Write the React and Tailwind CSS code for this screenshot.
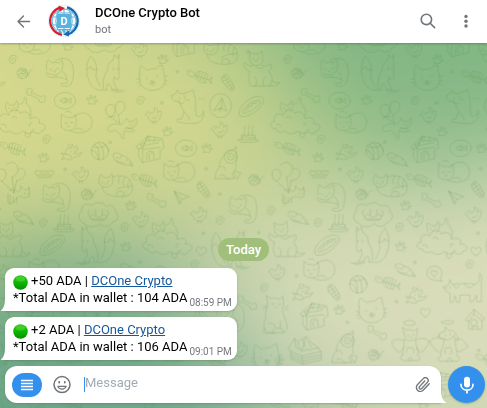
import { useEffect, useRef } from "react";

const GRADIENT_POINTS = [
  { x: 0.8, y: 0.1, rgb: [127, 181, 131] },
  { x: 0.35, y: 0.25, rgb: [213, 216, 141] },
  { x: 0.2, y: 0.9, rgb: [107, 165, 135] },
  { x: 0.65, y: 0.75, rgb: [219, 221, 187] },
];

function paintGradient(canvas) {
  const size = canvas.width;
  const ctx = canvas.getContext("2d");
  const image = ctx.createImageData(size, size);
  for (let row = 0; row < size; row++) {
    for (let col = 0; col < size; col++) {
      const cx = col / size - 0.5;
      const cy = row / size - 0.5;
      const swirl = 0.35 * Math.sqrt(cx * cx + cy * cy);
      const theta = swirl * swirl * 6.4;
      const px = 0.5 + cx * Math.cos(theta) - cy * Math.sin(theta);
      const py = 0.5 + cx * Math.sin(theta) + cy * Math.cos(theta);
      let total = 0;
      const sum = [0, 0, 0];
      for (const p of GRADIENT_POINTS) {
        const w = Math.max(0, 0.9 - Math.hypot(px - p.x, py - p.y)) ** 4;
        total += w;
        for (let i = 0; i < 3; i++) sum[i] += w * p.rgb[i];
      }
      const at = (row * size + col) * 4;
      for (let i = 0; i < 3; i++) image.data[at + i] = sum[i] / total;
      image.data[at + 3] = 255;
    }
  }
  ctx.putImageData(image, 0, 0);
}

// Line drawings of the wallpaper, each centred on its own origin.
const DOODLES = {
  fox: "M-4 48C-10 30-2 6 8-8C6-22 14-32 24-38L28-54L38-42L42-54V14C40 24 32 22 28 12L26 30C30 38 34 46 38 50H20C20 40 14 34 8 34C4 40 4 46 6 52H-18C-34 50-46 36-50 18C-60-6-54-32-44-50C-30-38-20-16-28 8C-24 22-20 34-14 42M-54-10L-42-18L-36-8L-24-10M25-14V-8M38-14V-8M18 54H60M30 58H50",
  face: "M-38-10C-40-24-38-34-34-38C-26-34-20-28-16-24C-6-28 4-30 10-28C16-36 24-40 30-40C32-28 34-18 36-8C44 14 30 34 4 36C-24 38-42 20-38-10M-16-2V2M14-8V-4M-4 8H4L0 12ZM0 12C-2 18-8 18-10 14M0 12C4 18 10 14 10 10M-2 17C-2 24 6 22 5 16M-46 2L-38 4M-46 14L-38 12M-40 24L-34 20M38-4L46-8M38 6L46 8M36 16L43 20",
  curl: "M-38-4C-40-20-38-30-34-36L-22-26C-14-30-8-28-2-26L8-36C12-24 12-12 6-2C-2 12-24 14-38 2M-30-8L-24-6M-8-8L-2-10M-18-2C-14 4-12 2-12-4M-12-32C2-46 30-42 38-24C46-4 42 20 38 30C34 44 20 46 6 42C2 38 6 34 12 34C22 36 26 32 24 24C12 18 0 18-10 16M-42 6C-36 18-20 20-8 14M10 0C18 4 22 12 22 22",
  loaf: "M-46 12C-50-2-44-18-46-28L-32-18C-26-20-18-18-14-16L-4-26C0-12 0 4-6 14C-16 26-36 24-46 12M-36-2C-34 2-30 2-28-2M-18-4C-16 0-12 0-10-4M-28 8L-24 11L-20 8M-10-18C4-34 28-36 40-22C50-10 48 12 36 20C22 30-2 32-18 22M-4 18C6 12 16 14 20 22M-34-34C-28-38-20-36-16-32",
  tiger: "M-48-6C-50-18-46-26-42-32L-34-22L-18-22L-10-34C-4-24-6-10-10-2C-22 12-40 8-48-6M-38-10V-6M-20-12V-8M-31-5L-27-2L-24-5M-8-24C12-32 38-28 48-10C56 6 52 24 42 30C20 38-8 36-26 26C-34 20-38 14-38 6M16-27C10-18 8-12 12-4M30-24C24-14 22-8 26 2M43-16C38-6 36 0 40 10M52 2C34 6 14 4 4 16M6 32C2 22 12 16 22 20C32 22 30 30 22 34",
  yarn: "M16 0A16 16 0 1 1-16 0A16 16 0 1 1 16 0M-14-6C-4-12 6-8 14 4M-12 4C-4-4 6-2 10 10M-6-14C6-12 12-6 16 0M-10 12C-8 2 4-12 10-12M-2 15C-2 6 4 2 12-8M12 12C22 12 18-10 30-12",
  fish: "M-34-18C-22-20-14-12-14-4C-20 4-30 0-36-8ZM-28-12V-10M-14-4L30 10M-8-14L-12 6M0-12L-6 10M8-8L2 12M16-6L10 16M24-2L18 18M-8-14C-2-20 20-12 28-4M-6 12C4 20 14 20 20 18M30 10L38 0L34 12L38 22L28 12",
  feather: "M-12-24C-22-18-20-6-12 2L6 22C12 26 20 20 18 12C14-2 2-20-6-26ZM-18-14L-6-20M-16-4L2-14M-8 4L8-6M-2 12L14 2M6 18L18 10M-12-22L14 20",
  bone: "M-16-6L14 8C18 0 28 4 24 12C30 18 22 26 16 22C12 28 4 22 8 16L-20 0C-24 6-34 0-28-8C-34-14-26-22-20-16C-14-20-10-12-16-6",
  spiral: "M2 2C-4 4-6-6 2-6C12-6 12 8 2 10C-12 12-14-14 2-14C10-14 14-10 15-4",
  paw: "M-8 12C-14 4-4-4 0-4C6-4 14 6 8 12C4 14 0 8-8 12M-14-2C-18-8-10-10-9-4ZM-5-8C-8-16 2-18 1-8ZM6-8C6-16 14-14 11-6ZM12 2C14-4 20 0 16 4Z",
  bubbleFish: "M32 0A32 25 0 1 1-32 0A32 25 0 1 1 32 0M-14 0C-8-10 4-10 10-1L18-8V8L10 1C2 10-8 8-14 0M-7-1V1M0-6V6M5-5V5",
  plane: "M-22-18L22-2L2 6L-6 20ZM-22-18L2 6M-22-18L-4 14",
  planeBubble: "M33 0A33 36 0 1 1-33 0A33 36 0 1 1 33 0M-20 14L4-22L18 16L2 8ZM4-22L2 8M-6 10L2 8L-2 18",
  hotdog: "M-38 18C-42 4-16-24 10-32C28-36 40-28 34-14C24 10-8 28-28 28C-34 28-38 24-38 18M-28 12C-18-6 4-20 22-22C28-18 26-12 20-6C4 8-16 18-26 18ZM-20 10L-12 4L-10-4L0-4L2-12L12-12L18-18",
  tub: "M-26-10H26C30-6 28 0 22 2H20C22 8 18 12 14 10H-14C-20 12-22 6-20 2H-22C-28 0-30-6-26-10M-14-2C-8-8-4 4 2-2S12 2 16-2M-18 4H18",
  cloudCat: "M-58 36C-78 36-76 14-60 14C-68-6-44-14-34-4C-32-24-4-26 0-10C16-22 34-8 30 6C50-4 64 10 56 20C76 18 84 38 66 42C60 56 44 50 40 44C28 54 16 50 10 42C-6 58-24 50-30 42C-40 50-54 46-58 36M-56 24C-48 20-42 24-42 30M-26 4C-20-4-10 0-10 6M36 20C30 18 26 22 28 28M-38-14C-46-26-44-38-40-44L-30-34L-16-36L-10-48C-2-36-6-22-14-14M-34-26L-30-24M-20-28L-16-26M-26-20L-22-18M-4-38C8-36 14-46 12-56C18-62 22-50 18-40C30-30 36-16 32-4M16 46C12 62 24 68 30 58C30 50 34 42 42 38",
  balloons: "M-38-24C-38-44-10-46-10-24C-10-10-20-2-24-2C-30-4-38-12-38-24M-8-38C-4-56 22-52 20-32C18-16 4-10 0-8C-6-12-10-22-8-38M-24-2L4 16M0-8L4 16M-32 2C-30-4-14-8-8-2M-28 26C-16 18-6 16 6 22C14 16 22 12 24 2L32 12L46 10L54 2C58 14 54 26 44 30C34 34 26 30 24 30C18 40 14 48 18 62C12 66 8 60 8 50C-2 44-6 40-10 36C-18 44-28 44-32 36ZM34 18V21M46 16V19M38 24L42 26M24 30L40 34C50 36 52 42 44 42L22 42",
  balloonDog: "M-40-30C-40-50-14-50-14-30C-14-16-24-8-28-8C-34-12-40-18-40-30M-14-56C-4-72 22-66 22-44C22-30 10-22 4-20M22-44C34-52 48-40 42-26C38-14 26-10 18-10M-26-8L10 26M4-20L10 26M18-10L10 26M-4 20C2 16 14 14 22 24L30 18V6L40 16L54 18V8C60 20 56 30 56 38C48 38 42 44 36 38C28 36 22 38 18 42V58M18 42L8 56V40M8 56L-2 60V34M-2 60L-8 56V30M42 26V30M52 28V31",
  dog: "M-44-40L-32-46L-28-56L-22-46C-10-44 0-48 10-52L18-56L22-46C30-20 24 6 30 22C42 28 48 18 50 6C56 24 44 40 28 44C14 46-8 44-26 40C-36 34-26 28-16 32L-8 10C-16-4-18-16-24-24C-36-18-46-28-44-40M-22-34V-30M-8-40C-6-28 0-24 8-26M-8 10C0 18 8 22 8 34M-24-22C-20-10-10-14-8-20M38-30H42M50-30H54",
  bird: "M-22-8C-18-14-10-12-8-6C2-8 4-18 0-24C10-24 12-14 10-8C16-14 22-16 22-10C22 0 18 14 6 18C-6 20-16 14-18 4L-26-2ZM-14-4V-2M-6 6C0 10 8 6 10 0M-4 18V24M4 18V24",
  cherub: "M-28 4L-16 8C-20-4-10-14 0-10L4-22L10-12L18-16C22-6 16 2 8 4C18 10 26 6 32 2C30 12 20 18 10 16C4 26-10 26-18 20L-28 24L-22 14ZM0-2V0M10-4V-2M-16 8C-8 6 0 10 2 18M-8-14C-14-22-4-28-2-20",
  ball: "M26 0A26 26 0 1 1-26 0A26 26 0 1 1 26 0M-16-20C-4-10 0 8-4 26M-6-25C8-16 14 4 10 24M10-24C18-16 24-6 26 0M-26-2C-16-2-8 4-4 26M-22-14C-8-8 8-10 18-18",
  mouse: "M-30-18C-26-24-12-22-6-14C8-12 22-2 28 18C12 14-14 14-22 2C-28-4-34-10-30-18M-22-8C-12-2-4-6-6-14M12-2V2M20 6V9M28 18L20 12M-22 2C-14 8-4 10 4 8",
  house: "M-42-10L-6-42L38-34L42-6L30 2V26L-22 38L-34 22V-4ZM-6-42L-24-4L-34-4M-24-4L-6-42M-22 38V-2L30-8M-10 30V12C-8 0 12 0 12 12V26M-2 28V12C0 6 8 6 8 12M-16-14L26-22M-10-28L34-30M0-40L-4-26M16-38L10-24M-24-8L-28-18M-30-14L-18-22",
  birdhouse: "M-28 0L-2-32L30-4L22 2V28H-18V4ZM-18 4L-2-18L22 2M8 8A10 10 0 1 1-12 8A10 10 0 1 1 8 8M-8 28V20H10V28M-2-18V-32",
  cone: "M-38 42C-40 26-34 16-26 8C-28-12-10-32 0-38L18-46L24-54V14L12 26L20 42H-4C-8 32-16 28-24 32M-26 8C-16 0-10 6-8 16M28-24A20 20 0 1 1-12-24A20 20 0 1 1 28-24M18-24A10 10 0 1 1-2-24A10 10 0 1 1 18-24M7-26V-22M20 20L38 24L28 44L18 24M-38 42H4",
  thought: "M-44 24C-62 20-60-6-50-10C-54-32-30-38-20-28C-8-42 16-38 24-26C40-34 54-22 50-10C64-4 60 20 42 22C36 38 12 36 4 26C-12 40-36 38-44 24M-28-14C-34-8-30 4-24 4V12H24V4C32 4 32-10 26-14M-8-16V0L2 8L12-2V-16M-24 4L-16-4L-8 4M10 4L18-4L24 4M-18 16H18",
  cake: "M-30 14H30C28 22 20 22 14 22H-14C-22 22-28 20-30 14M-20 14V0H20V14M-20 6C-12 10-8 2 0 6S12 10 20 6M-12 0V-10M0 0V-12M12 0V-10M-12-14C-8-20-14-22-10-28M0-16C4-22-2-24 2-30M12-14C16-20 10-22 14-28",
  stand: "M-28-40L-30-52L-18-46H-2L8-56L10-38C14-24 6-12-6-12C-20-10-32-20-28-40M-18-34V-30M-2-36V-32M-12-26L-8-24L-6-28M-18-12C-28-4-36-14-44-20C-50-10-40 4-28 6C-34 22-32 38-26 50H30C42 38 40 18 28 6C36 0 40-10 34-16C26-10 16-8 8-12M-12 50C-6 38-6 30-16 22M14 50C8 38 10 28 20 22M30 50C46 52 60 46 62 38C52 44 44 40 38 34M-10-10C-4-2 8 0 14-8",
  sit: "M-22-30L-26-56L-12-46C-4-48 6-48 14-44L24-54L26-26C18-14 26 2 32 20C40 34 36 52 26 56H-22C-36 48-36 28-28 16C-30 0-26-14-22-30M-10-32C-8-28-4-28-2-32M10-30C12-26 16-26 18-30M-2-22L2-18L6-22M-36-24H-24M-36-16L-24-18M30-20L40-24M30-14H40M-8 56C-6 42 6 40 14 44M-20 30C-8 24 0 30 0 38M16 22V44C24 44 26 50 22 56M-28 44C-36 46-38 52-30 58H0",
  heart: "M0 14C-10 8-18-2-12-10C-6-16 0-8 0-6C4-12 14-14 16-6C18 2 8 10 0 14",
  heartBubble: "M20 12A23 21 0 1 0 4 20L22 24ZM0 10C-10 4-12-6-6-8C0-10 0-4 0-4C2-10 12-8 10-2C8 4 4 8 0 10",
  walk: "M-60-4L-46-8L-40-26L-34-12C-16-14 16-16 32-12C48-14 50-26 48-44C56-48 56-28 54-16V40H40V20L28 40H20V20H-10V42H-20L-24 22L-32 42H-40V16C-48 12-58 6-60-4M-40-4V0M-28-10C-26 2-16 4-14-10M4-14C8 0 28 2 32-12M-54 0H-50",
  box: "M-50-2L-30-32L-20-24L4-38L20-20L42-4L50 12V32L-6 44L-42 28V6ZM-42 6L-8 20L50 6M-8 20L-6 44M-42 14L-8 28L50 16M-42 22L-6 36L50 24M-30-32L-26-6L-8 4L4-38M-8 4L42-4M-20-20L-14-2M-6-30L0-8M10-24L20-8",
  angelCat: "M-16-32L-22-52L-8-44C0-46 8-44 12-40L24-50L22-30C20-18 10-10 0-12C-10-12-16-20-16-32M-8-28C-6-24-3-24-2-28M8-30C10-26 13-26 14-30M1-22L4-20L7-23M-14-14C-26-12-40-22-54-8C-50-4-56 4-46 8C-46 18-34 16-30 24C-26 18-20 16-16 8M16-14C30-20 46-22 60-10C54-6 58 4 48 8C48 16 38 18 34 24C28 20 24 16 20 8M-16-12C-14 4-24 14-20 32C-30 34-30 46-16 48H24C34 46 32 34 24 32C28 14 18 4 18-12M-10 24C-10 10-4 2 2 12C6 2 14 8 12 24M-4 48C-4 34 8 34 8 48M-18-66C-6-78 20-72 16-62C4-54-18-56-18-66",
  angelDog: "M-28-26C-30-34-20-38-10-38L-8-54L2-42C14-46 22-38 26-26C34-20 32-10 24-12C20-16 20-22 18-28C10-14-4-12-12-18C-20-18-26-20-28-26M-8-30V-26M6-32V-28M-30-24L-24-28M-10-14C-26-24-44-24-56-8C-48-6-52 4-42 8C-42 18-30 16-26 24M20-12C34-26 52-12 60 6C52 6 52 18 42 16C38 24 30 22 26 18M-12-14C-10 4-24 14-22 36C-32 38-34 48-20 50H28C38 46 34 36 26 34C28 14 22 2 20-10M-8 28C-12 12-6 0 0 12C6 0 14 10 10 28M-2 50C0 36 10 36 12 50M-20-68C-10-74 14-74 18-68C14-60-14-60-20-68",
  dot: "M4 0A4 4 0 1 1-4 0A4 4 0 1 1 4 0",
};

const WALLPAPER = [
  ["tiger", 660, 158], ["bird", 420, 150], ["loaf", 105, 134], ["thought", 310, 122], ["paw", 203, 138], ["house", 553, 132],
  ["spiral", 37, 180], ["yarn", 67, 220], ["curl", 178, 215], ["fox", 315, 218], ["paw", 488, 178], ["face", 457, 235], ["fish", 598, 230],
  ["feather", 684, 249], ["stand", 778, 208], ["dot", 532, 215], ["dot", 744, 154], ["bone", 110, 283], ["bubbleFish", 195, 302], ["paw", 275, 300],
  ["spiral", 420, 303], ["dot", 485, 308], ["dog", 560, 326], ["planeBubble", 662, 317], ["hotdog", 755, 322], ["cloudCat", 60, 350], ["loaf", 230, 370],
  ["balloons", 355, 353], ["bird", 462, 347], ["paw", 502, 395], ["bird", 660, 390], ["cake", 745, 405], ["fish", 38, 445], ["spiral", 138, 420],
  ["dot", 330, 427], ["cherub", 213, 455], ["paw", 130, 473], ["ball", 300, 453], ["mouse", 370, 480], ["house", 450, 450], ["bubbleFish", 558, 445],
  ["paw", 620, 445], ["cone", 684, 494], ["yarn", 762, 540], ["balloonDog", 32, 552], ["tub", 133, 523], ["dot", 195, 508], ["bird", 243, 525],
  ["tiger", 345, 555], ["fish", 432, 540], ["loaf", 538, 518], ["dot", 618, 506], ["feather", 610, 570], ["curl", 168, 590], ["yarn", 260, 583],
  ["paw", 392, 617], ["bone", 472, 598], ["plane", 545, 592], ["dot", 659, 582], ["curl", 728, 625], ["bird", 598, 645], ["spiral", 658, 663],
  ["spiral", 812, 634], ["thought", 295, 645], ["mouse", 72, 655], ["bird", 423, 660], ["cake", 192, 673], ["spiral", 128, 670], ["spiral", 373, 683],
  ["fox", 288, 735, true], ["paw", 377, 740], ["cloudCat", 500, 712], ["hotdog", 158, 738], ["stand", 28, 720], ["dot", 610, 700], ["heart", 603, 753],
  ["fox", 690, 748], ["dot", 776, 698], ["loaf", 134, 812], ["bird", 8, 818], ["dot", 420, 787], ["spiral", 583, 795], ["mouse", 393, 812],
  ["heartBubble", 478, 820], ["dot", 65, 828], ["spiral", 791, 865], ["cherub", 83, 875], ["feather", 178, 878], ["ball", 251, 853], ["fish", 338, 848],
  ["cherub", 423, 885], ["walk", 566, 865], ["bone", 744, 905], ["dot", 365, 905], ["sit", 1, 942], ["house", 118, 952], ["paw", 193, 930],
  ["face", 291, 932], ["heart", 451, 937], ["birdhouse", 600, 960], ["dot", 218, 967], ["bone", 310, 995], ["curl", 690, 950],
  ["box", 90, 1048], ["cone", 211, 1046], ["yarn", 297, 1065], ["angelCat", 405, 1034], ["angelDog", 520, 1034], ["face", 800, 1072], ["fish", 640, 1080],
  ["dot", 612, 1051], ["bird", 720, 1050], ["loaf", 40, 1150], ["bone", 150, 1165], ["paw", 205, 1125], ["spiral", 12, 1085], ["mouse", 290, 1150],
  ["curl", 385, 1160], ["house", 500, 1160], ["bird", 590, 1150], ["ball", 670, 1170], ["feather", 745, 1165], ["bone", 20, 1215], ["bird", 110, 1215],
  ["paw", 445, 1214], ["fish", 210, 1212],
];

function Wallpaper() {
  const ref = useRef(null);
  useEffect(() => paintGradient(ref.current), []);
  return (
    <div className="absolute inset-0" aria-hidden="true">
      <canvas ref={ref} width={60} height={60} className="absolute inset-0 h-full w-full" />
      <svg className="absolute inset-0 h-full w-full">
        <defs>
          {Object.entries(DOODLES).map(([name, d]) => (
            <path key={name} id={name} d={d} />
          ))}
          <g id="tile">
            {WALLPAPER.map(([name, x, y, flip], i) => (
              <use key={i} href={"#" + name} transform={`translate(${x} ${y}) scale(${flip ? -1 : 1} 1)`} />
            ))}
          </g>
          <pattern id="doodles" width="824" height="1300" patternUnits="userSpaceOnUse" patternTransform="scale(0.33333)">
            <g fill="none" stroke="#43803a" strokeOpacity="0.23" strokeWidth="2.4" strokeLinejoin="round" strokeLinecap="round">
              <use href="#tile" x="-824" />
              <use href="#tile" />
              <use href="#tile" x="824" />
            </g>
          </pattern>
        </defs>
        <rect width="100%" height="100%" fill="url(#doodles)" />
      </svg>
    </div>
  );
}

function Avatar() {
  return (
    <svg className="size-8 shrink-0" viewBox="0 0 32 32" fill="none" role="img" aria-label="DCOne">
      <circle cx="16" cy="16" r="15.5" stroke="#b9d7ec" strokeWidth="0.7" strokeDasharray="1.4 1" />
      <circle cx="16" cy="16" r="12" fill="#f4fafd" stroke="#62b5de" />
      <path d="M5 12H27M5 20H27M16 4V28M11 5C7 12 7 20 11 27M21 5C25 12 25 20 21 27M7 8H25" stroke="#62b5de" strokeWidth="1.1" />
      <rect x="9" y="9" width="14" height="14" rx="1" fill="#5ab3de" />
      <path d="M9 24H23L21 27L11 28Z" fill="#5ab3de" />
      <path d="M10 25V28M13 25L15 28M18 25V28M21 25L20 27" stroke="#fff" />
      <path d="M14 29.8A14 14 0 0 1 12 2.6" stroke="#d5202b" strokeWidth="2.2" />
      <path d="M10.5 0.6L17 3L11.5 7Z" fill="#d5202b" />
      <path d="M19 2.4A14 14 0 0 1 19 29.6" stroke="#1769ad" strokeWidth="2.2" />
      <path d="M21 25.5L15 29.5L21 31.5Z" fill="#1769ad" />
      <text x="16" y="20" textAnchor="middle" fontSize="11" fontWeight="700" fill="#fff">D</text>
    </svg>
  );
}

function GreenDot() {
  return (
    <svg className="-my-1 mr-[3px] inline-block size-[15px] align-[-1px]" viewBox="0 0 15 15" role="img" aria-label="green circle">
      <defs>
        <linearGradient id="dotFill" x1="0" y1="0" x2="0" y2="1">
          <stop offset="0" stopColor="#35c91d" />
          <stop offset="0.5" stopColor="#0cb800" />
          <stop offset="1" stopColor="#098b00" />
        </linearGradient>
      </defs>
      <circle cx="7.5" cy="7.5" r="7.3" fill="url(#dotFill)" />
      <ellipse cx="7.5" cy="4" rx="4.5" ry="2.5" fill="#6fe34f" fillOpacity="0.4" />
    </svg>
  );
}

function Message({ amount, total, time }) {
  return (
    <article className="relative flex w-fit items-end rounded-[9px] rounded-bl-none bg-white pt-1 pr-[5px] pb-[5px] pl-2 shadow-[0_1px_2px_rgba(80,110,70,0.35)]">
      <svg className="absolute bottom-0 -left-1 h-3 w-1" viewBox="0 0 4 12" aria-hidden="true">
        <path d="M4 0V12H0.5C-0.3 12 0 11.3 0.5 11C2.8 9 4 5 4 0Z" fill="#fff" />
      </svg>
      <p className="text-[13px] leading-[17px] text-black">
        <GreenDot />
        {amount} ADA |{" "}
        <a href="#dcone" className="text-[#17579b] underline">DCOne Crypto</a>
        <br />
        *Total ADA in wallet : {total} ADA
      </p>
      <time className="-mb-1 ml-0.5 text-[10px] leading-[14px] text-[#75797e]">{time}</time>
    </article>
  );
}

export default function App() {
  return (
    <div className="relative flex h-screen flex-col overflow-hidden font-[Roboto,sans-serif]">
      <Wallpaper />
      <header className="relative flex h-[43px] shrink-0 items-center bg-white pr-3 pl-4 shadow-[0_1px_2px_rgba(70,90,60,0.45)]">
        <button type="button" aria-label="Back" className="text-[#707579]">
          <svg className="size-4" viewBox="0 0 16 16" fill="none" stroke="currentColor" strokeWidth="1.4" strokeLinecap="round" strokeLinejoin="round">
            <path d="M7.5 2L2 7.5L7.5 13M2 7.5H13.5" />
          </svg>
        </button>
        <div className="ml-4 flex min-w-0 flex-1 items-center gap-[15px] pb-0.5">
          <Avatar />
          <div className="min-w-0">
            <h1 className="truncate text-[13px] leading-[17px] font-medium text-black">DCOne Crypto Bot</h1>
            <p className="text-[11px] leading-[17px] text-[#707579]">bot</p>
          </div>
        </div>
        <button type="button" aria-label="Search" className="text-[#707579]">
          <svg className="size-[18px]" viewBox="0 0 18 18" fill="none" stroke="currentColor" strokeWidth="1.6" strokeLinecap="round">
            <circle cx="7.4" cy="6.4" r="5.2" />
            <path d="M11.2 10.2L15.6 14.6" />
          </svg>
        </button>
        <button type="button" aria-label="More actions" className="ml-5 text-[#707579]">
          <svg className="size-[18px]" viewBox="0 0 18 18" fill="currentColor">
            <circle cx="9" cy="3.4" r="1.7" />
            <circle cx="9" cy="8.2" r="1.7" />
            <circle cx="9" cy="13" r="1.7" />
          </svg>
        </button>
      </header>

      <main className="relative flex min-h-0 flex-1 flex-col justify-end px-[5px]">
        <div className="mb-[7px] self-center rounded-full bg-[#a1bf7b] px-2 text-[13px] leading-[23px] font-medium text-white">Today</div>
        <div className="flex flex-col gap-1.5">
          <Message amount="+50" total="104" time="08:59 PM" />
          <Message amount="+2" total="106" time="09:01 PM" />
        </div>
      </main>

      <footer className="relative flex shrink-0 items-center gap-[7px] pt-1.5 pr-0.5 pb-[5px] pl-[5px]">
        <form className="relative flex h-[37px] min-w-0 flex-1 items-center rounded-xl rounded-br-none bg-white pr-2.5 pl-[7px] shadow-[0_1px_2px_rgba(80,110,70,0.35)]">
          <svg className="absolute -right-[5px] bottom-0 h-3 w-[5px]" viewBox="0 0 5 12" aria-hidden="true">
            <path d="M0 0V12H4.4C5.2 12 5 11.3 4.4 11C1.5 9 0 5 0 0Z" fill="#fff" />
          </svg>
          <button type="button" aria-label="Bot menu" className="flex h-6 w-[30px] shrink-0 items-center justify-center rounded-full bg-[#3390ec]">
            <svg className="h-3 w-3" viewBox="0 0 12 12" stroke="#fff" strokeWidth="1.3">
              <path d="M0 1.5H12M0 4.5H12M0 7.5H12M0 10.5H12" />
            </svg>
          </button>
          <button type="button" aria-label="Emoji" className="ml-2.5 text-[#707579]">
            <svg className="size-5" viewBox="0 0 20 20" fill="none" stroke="currentColor" strokeWidth="1.5" strokeLinecap="round">
              <circle cx="10" cy="9.6" r="8" />
              <path d="M5.8 11.4C7.2 15 12.8 15 14.2 11.4Z" strokeLinejoin="round" strokeWidth="1.2" />
              <path d="M7.2 6.8V7.6M12.8 6.8V7.6" strokeWidth="1.8" />
            </svg>
          </button>
          <span className="ml-3 h-[15px] w-px shrink-0 bg-[#3390ec]" />
          <input aria-label="Message" placeholder="Message" className="min-w-0 flex-1 pb-1 text-[13px] leading-[17px] text-black outline-none placeholder:text-[#a2acb4]" />
          <button type="button" aria-label="Attach" className="text-[#707579]">
            <svg className="size-4" viewBox="0 0 24 24" fill="none" stroke="currentColor" strokeWidth="2" strokeLinecap="round" strokeLinejoin="round">
              <path d="M21.4 10.2L12.6 19.6A6 6 0 0 1 3.6 11.6L12.3 2.4A4.2 4.2 0 0 1 18.6 8L10 17.3A2.1 2.1 0 0 1 6.8 14.4L14.6 6" />
            </svg>
          </button>
        </form>
        <button type="button" aria-label="Record voice message" className="flex size-[37px] shrink-0 items-center justify-center rounded-full bg-[#3390ec] shadow-[0_1px_2px_rgba(80,110,70,0.35)]">
          <svg className="size-[18px]" viewBox="0 0 18 18" fill="none" stroke="#fff" strokeWidth="1.7" strokeLinecap="round">
            <rect x="6" y="0.8" width="6" height="10.6" rx="3" fill="#fff" stroke="none" />
            <path d="M3 8.4C3 16 15 16 15 8.4M9 14.4V16.8" />
          </svg>
        </button>
      </footer>
    </div>
  );
}
